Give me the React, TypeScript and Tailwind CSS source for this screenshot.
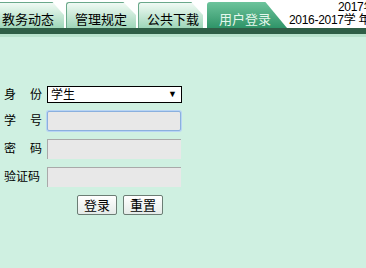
import React from "react";

const tabs = [
  { label: "教务动态", w: "w-[64px]", active: false },
  { label: "管理规定", w: "w-[70px]", active: false },
  { label: "公共下载", w: "w-[65px]", active: false },
];

function Label({ a, b }: { a: string; b: string }) {
  return (
    <span className="w-[43px] shrink-0 flex">
      <span className="w-[38px] flex justify-between">
        <span>{a}</span>
        <span>{b}</span>
      </span>
    </span>
  );
}

function App() {
  return (
    <div
      className="w-[366px] h-[268px] overflow-hidden bg-[#cff0e1] text-black"
      style={{ fontFamily: '"Liberation Sans", "Noto Sans CJK SC", sans-serif' }}
    >
      {/* top tabs */}
      <div className="flex h-[28px] bg-white items-end">
        <div className="flex items-end gap-[2px] shrink-0">
          {tabs.map((t, i) => (
            <div
              key={t.label}
              className={`${t.w} h-[26px] flex items-end pb-[2px] text-[13px] leading-none bg-gradient-to-b from-[#f0faf4] to-[#9ed6b9] border-l border-t border-[#6aa88a] ${
                i === 0 ? "pl-[2px] border-l-0" : "pl-[8px] rounded-tl-[3px]"
              } [clip-path:polygon(0_0,82%_0,100%_50%,100%_100%,0_100%)]`}
            >
              {t.label}
            </div>
          ))}
          <div className="ml-[2px] w-[80px] h-[26px] flex items-end pb-[2px] pl-[12px] text-[13px] leading-none text-[#e4f7ec] bg-gradient-to-b from-[#6cc49c] to-[#2e9468] rounded-tl-[3px] [clip-path:polygon(0_0,73%_0,100%_100%,0_100%)]">
            用户登录
          </div>
        </div>
        <div className="flex-1 min-w-0 flex flex-col text-[12px] leading-[13px] whitespace-nowrap overflow-hidden pl-[2px] tracking-[-0.3px]">
          <span className="pl-[49px]">2017年</span>
          <span className="pb-[1px]">2016-2017学 年</span>
        </div>
      </div>
      <div className="h-[6px] bg-[#2f5e46]" />
      <div className="h-[3px] bg-[#b8e2cc]" />

      {/* login form */}
      <div className="pt-[49px] pl-[4px] text-[12px]">
        <div className="flex items-center h-[17px]">
          <Label a="身" b="份" />
          <div className="w-[135px] h-[17px] bg-white border border-black flex items-center justify-between pl-[3px] pr-[4px] text-[12px]">
            <span>学生</span>
            <span className="text-[9px]">▼</span>
          </div>
        </div>
        <div className="flex items-center mt-[8px] h-[20px]">
          <Label a="学" b="号" />
          <div className="w-[134px] h-[20px] bg-[#e8e8e8] border border-[#8ab0de] rounded-[2px] shadow-[0_0_0_1px_#b8d4f4]" />
        </div>
        <div className="flex items-center mt-[8px] h-[20px]">
          <Label a="密" b="码" />
          <div className="w-[134px] h-[20px] bg-[#e8e8e8] border-t border-l border-[#a9a9a9] border-r-[#e8e8e8] border-b-[#e8e8e8]" />
        </div>
        <div className="flex items-center mt-[8px] h-[20px]">
          <span className="w-[43px] shrink-0">验证码</span>
          <div className="w-[134px] h-[20px] bg-[#e8e8e8] border-t border-l border-[#a9a9a9] border-r-[#e8e8e8] border-b-[#e8e8e8]" />
        </div>
        <div className="flex gap-[6px] mt-[8px] pl-[73px]">
          <button className="w-[40px] h-[20px] bg-gradient-to-b from-white to-[#e4ebe8] border border-[#6b7d74] rounded-[2px] text-[13px] leading-none">
            登录
          </button>
          <button className="w-[40px] h-[20px] bg-gradient-to-b from-white to-[#e4ebe8] border border-[#6b7d74] rounded-[2px] text-[13px] leading-none">
            重置
          </button>
        </div>
      </div>
    </div>
  );
}

export default App;
